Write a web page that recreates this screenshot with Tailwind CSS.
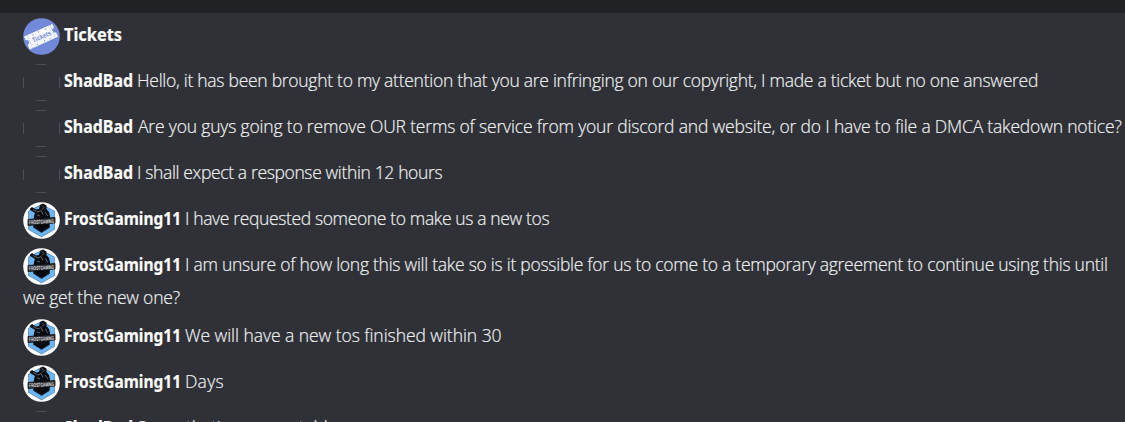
<!DOCTYPE html>
<html lang="en">
<head>
<meta charset="utf-8">
<title>Ticket messages</title>
<script src="https://cdn.jsdelivr.net/npm/@tailwindcss/browser@4"></script>
</head>
<body class="h-[422px] w-[1125px] overflow-hidden bg-[#2f3136] font-['Open_Sans',sans-serif] text-[17.5px] leading-[33px] font-light whitespace-nowrap text-[#eeeff0] [-webkit-text-stroke:0.2px_#eeeff0]">
<svg class="hidden">
  <symbol id="blank" viewBox="0 0 37 37">
    <g fill="none" stroke="#5a5d62" stroke-width=".7"><path d="M13.500 .5h10M13.500 36.500h10"/><path d="M.5 13v11M36.500 13v11"/></g>
  </symbol>
  <symbol id="frost" viewBox="0 0 37 37">
    <circle cx="18.500" cy="18.500" r="18.300" fill="#fff"/>
    <path d="M18.500 2.500 31.500 9v18.500L18.500 35 5.500 27.500V9Z" fill="#6db4f2" stroke="#2c5a88" stroke-width=".5"/>
    <path d="M18.500 30.500 10.500 25.500V21h16v4.500Z" fill="#08090b" stroke="#163456" stroke-width=".8"/>
    <path d="M8 8.500 6.500 7 9 5l4 2.500 3-.5L17 3l3-1.500 3.500 2V7l2.500 3 1 4v5.500H10.500L11 14l1-3Z" fill="#0b0d10"/>
    <path d="m10 7.500 5 2.500 3-1.500 2 4M19 3.500l2 2-2 2M22 10l3 4M14 13l3 1" fill="none" stroke="#6a7680" stroke-width=".8"/>
    <path d="m5 17.500 13.500-1 13.500-1v5.500l-13.500 1.500L5 23.500Z" fill="#2d2f33" stroke="#0c0d0e" stroke-width=".8"/>
    <text x="6" y="21.700" transform="rotate(-3 18.500 20)" stroke="none" font-family="Liberation Sans" font-size="5.500" font-weight="700" fill="#dcdcdc" textLength="25" lengthAdjust="spacingAndGlyphs">FROSTGAMING</text>
  </symbol>
</svg>

<div class="h-[13px] bg-[#202225]"></div>
<main class="flex h-[409px] flex-col overflow-hidden pt-[5px] pl-[23px]">
  <div class="flex h-[46px] shrink-0">
    <svg class="mr-1 size-[37px] shrink-0 [-webkit-text-stroke:0]" viewBox="0 0 37 37">
      <circle cx="18.500" cy="18.500" r="18.300" fill="#7289da"/>
      <g transform="rotate(-24 18.500 18.500)">
        <path d="M2.500 11.500h31v4a2.500 2.500 0 0 0 0 5v5h-31v-5a2.500 2.500 0 0 0 0-5Z" fill="#f6f7fd"/>
        <path d="M6 12v13M31 12v13" stroke="#7289da" stroke-width=".7" stroke-dasharray="1 1.500"/>
        <path d="M11 13.500h1M17 13h1M25 13.500h1M11 24h1M19 23.500h1M25 24h1" stroke="#7289da" stroke-width="1.200"/>
        <text x="8.500" y="21" stroke="none" font-family="Liberation Sans" font-size="7" font-weight="700" fill="#7289da" textLength="20" lengthAdjust="spacingAndGlyphs">Tickets</text>
      </g>
    </svg>
    <b class="w-[58px] origin-left scale-x-[0.91] font-['Noto_Sans'] text-[18px] font-bold text-white">Tickets</b>
  </div>
  <div class="flex h-[46px] shrink-0">
    <svg class="mr-1 size-[37px] shrink-0"><use href="#blank"/></svg>
    <b class="w-[73px] shrink-0 origin-left scale-x-[0.886] font-['Noto_Sans'] text-[18px] font-bold text-white">ShadBad</b>
    <span class="tracking-[-0.275px]">Hello, it has been brought to my attention that you are infringing on our copyright, I made a ticket but no one answered</span>
  </div>
  <div class="flex h-[46px] shrink-0">
    <svg class="mr-1 size-[37px] shrink-0"><use href="#blank"/></svg>
    <b class="w-[74px] shrink-0 origin-left scale-x-[0.886] font-['Noto_Sans'] text-[18px] font-bold text-white">ShadBad</b>
    <span class="tracking-[-0.177px]">Are you guys going to remove OUR terms of service from your discord and website, or do I have to file a DMCA takedown notice?</span>
  </div>
  <div class="flex h-[46px] shrink-0">
    <svg class="mr-1 size-[37px] shrink-0"><use href="#blank"/></svg>
    <b class="w-[73px] shrink-0 origin-left scale-x-[0.886] font-['Noto_Sans'] text-[18px] font-bold text-white">ShadBad</b>
    <span class="tracking-[-0.36px]">I shall expect a response within 12 hours</span>
  </div>
  <div class="flex h-[46px] shrink-0">
    <svg class="mr-1 size-[37px] shrink-0"><use href="#frost"/></svg>
    <b class="w-[121px] shrink-0 origin-left scale-x-[0.86] font-['Noto_Sans'] text-[18px] font-bold text-white">FrostGaming11</b>
    <span class="tracking-[-0.365px]">I have requested someone to make us a new tos</span>
  </div>
  <div class="h-[71px] shrink-0">
    <div class="flex h-[33px]">
      <svg class="mr-1 size-[37px] shrink-0"><use href="#frost"/></svg>
      <b class="w-[121px] shrink-0 origin-left scale-x-[0.86] font-['Noto_Sans'] text-[18px] font-bold text-white">FrostGaming11</b>
      <span class="tracking-[-0.265px]">I am unsure of how long this will take so is it possible for us to come to a temporary agreement to continue using this until</span>
    </div>
    <span class="block tracking-[-0.22px]">we get the new one?</span>
  </div>
  <div class="flex h-[46px] shrink-0">
    <svg class="mr-1 size-[37px] shrink-0"><use href="#frost"/></svg>
    <b class="w-[121px] shrink-0 origin-left scale-x-[0.86] font-['Noto_Sans'] text-[18px] font-bold text-white">FrostGaming11</b>
    <span class="tracking-[-0.05px]">We will have a new tos finished within 30</span>
  </div>
  <div class="flex h-[46px] shrink-0">
    <svg class="mr-1 size-[37px] shrink-0"><use href="#frost"/></svg>
    <b class="w-[121px] shrink-0 origin-left scale-x-[0.86] font-['Noto_Sans'] text-[18px] font-bold text-white">FrostGaming11</b>
    <span class="tracking-[0.25px]">Days</span>
  </div>
  <div class="flex h-[46px] shrink-0">
    <svg class="mr-1 size-[37px] shrink-0"><use href="#blank"/></svg>
    <b class="w-[73px] shrink-0 origin-left scale-x-[0.886] font-['Noto_Sans'] text-[18px] font-bold text-white">ShadBad</b>
    <span class="tracking-[-0.1px]">Sorry, that's unacceptable</span>
  </div>
</main>
</body>
</html>
